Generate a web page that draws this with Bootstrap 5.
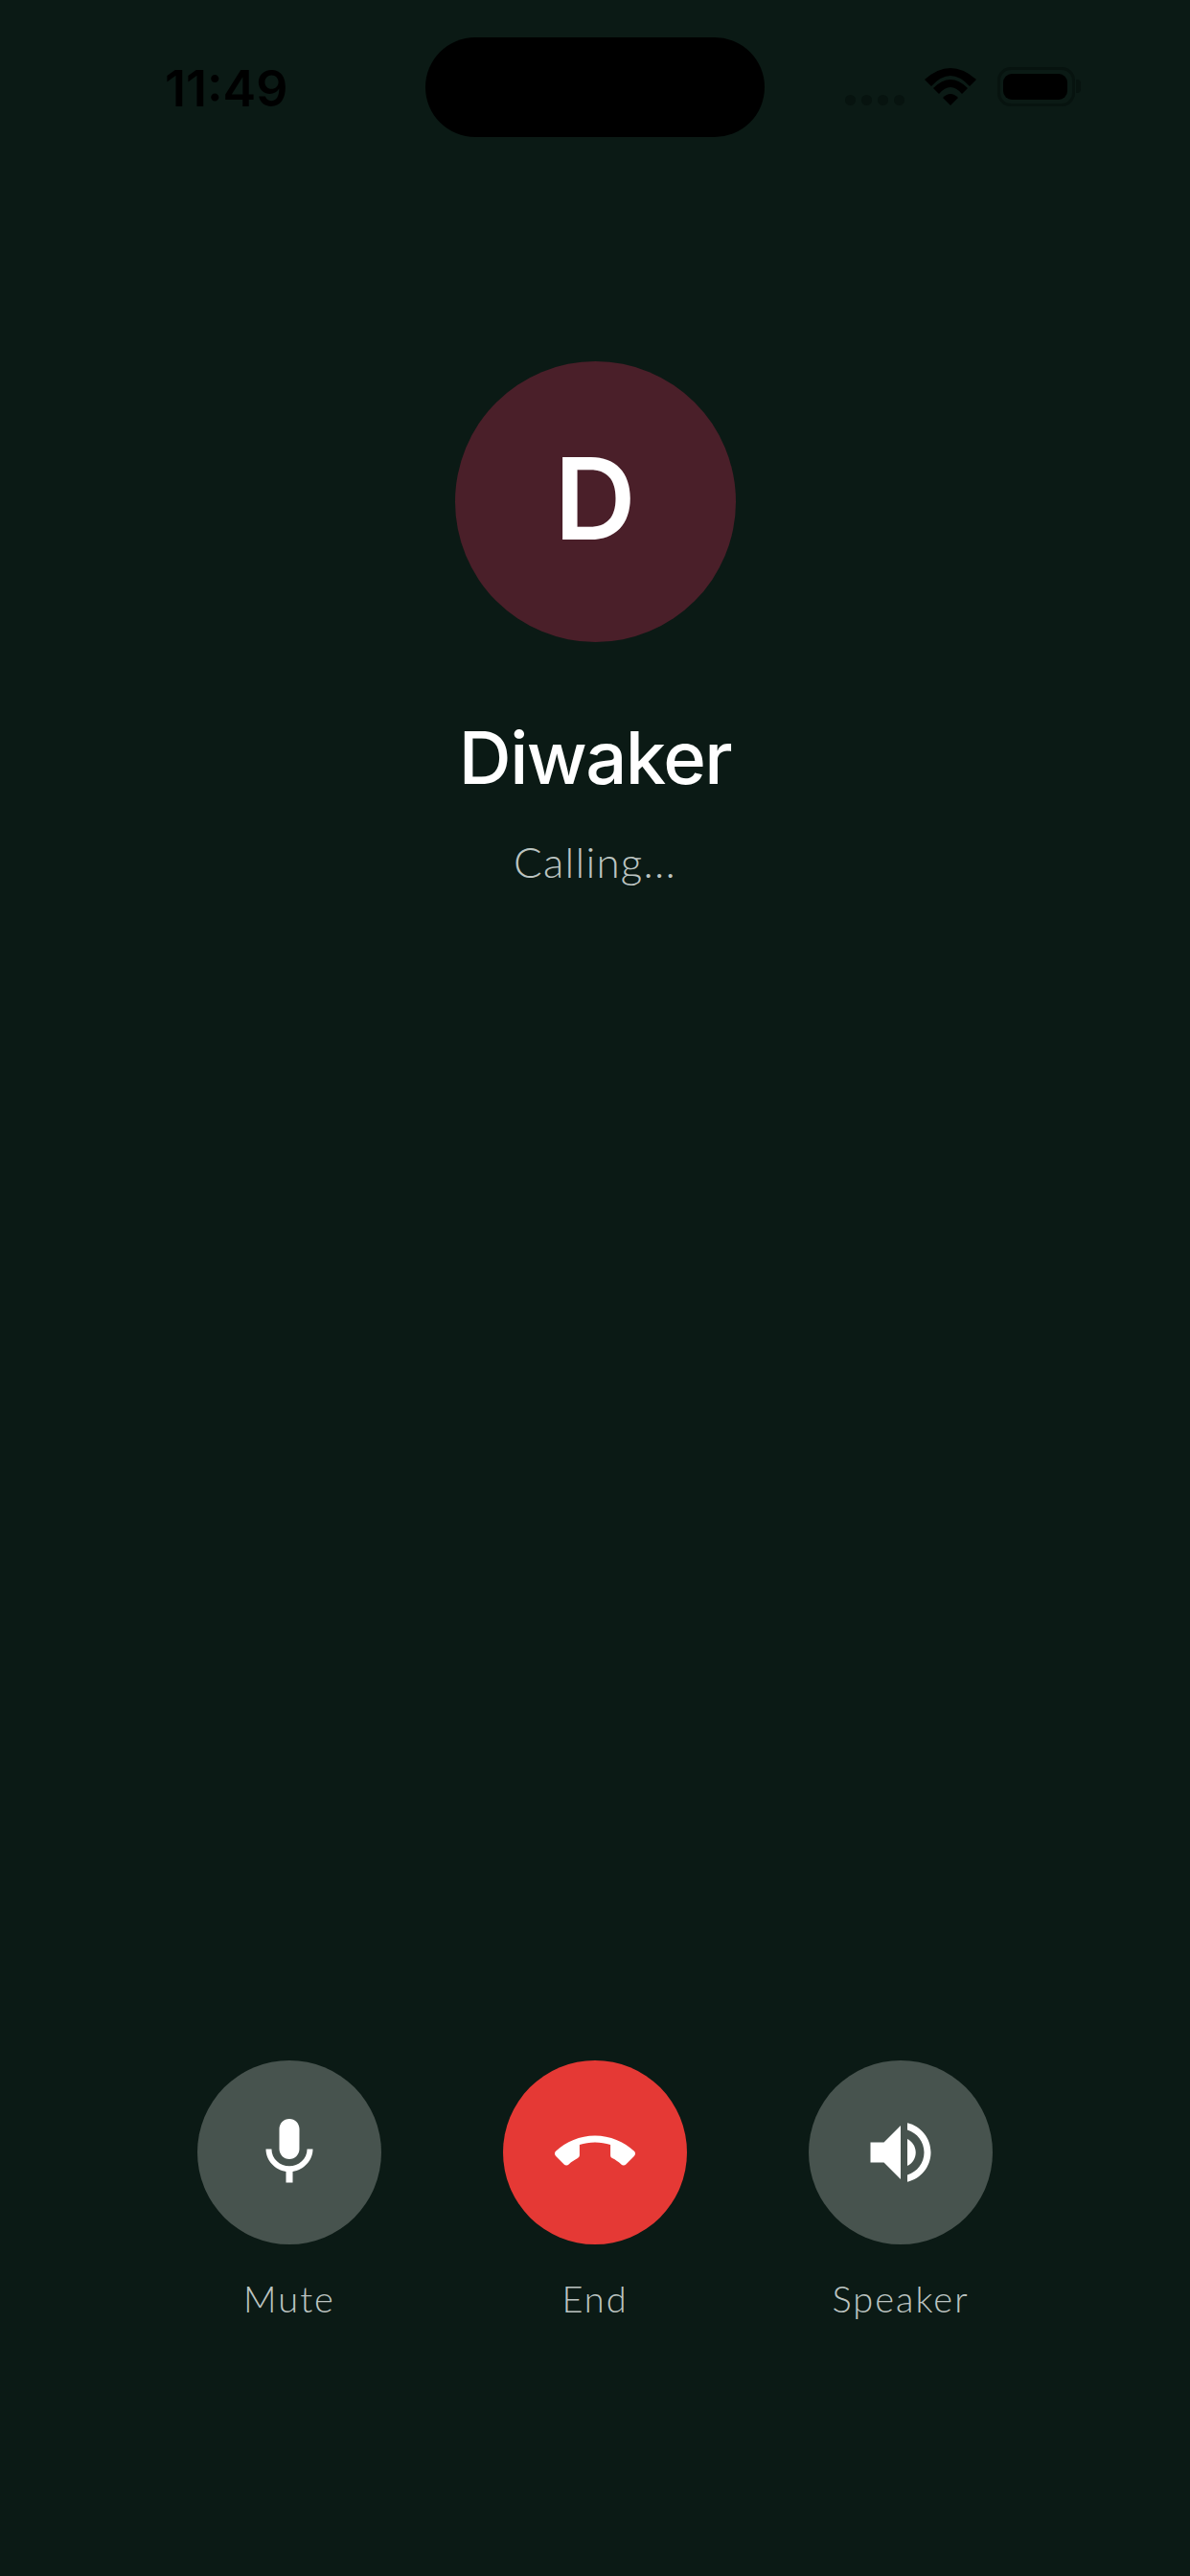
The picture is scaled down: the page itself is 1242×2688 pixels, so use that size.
<!DOCTYPE html>
<html lang="en">
<head>
    <meta charset="UTF-8">
    <meta name="viewport" content="width=device-width, initial-scale=1.0">
    <title>Calling Diwaker</title>
    <link href="https://cdn.jsdelivr.net/npm/bootstrap@5.3.0/dist/css/bootstrap.min.css" rel="stylesheet">
    <style>
        body {
            background: #0b1a15;
            font-family: Inter, "Noto Sans", sans-serif;
        }
        .call-screen {
            height: 2688px;
        }
        /* status bar */
        .status-row {
            display: grid;
            grid-template-columns: 1fr 354px 1fr;
            padding-top: 39px;
        }
        .status-time {
            font-weight: 600;
            font-size: 52px;
            line-height: 1;
            letter-spacing: 0;
            color: #000;
            padding: 28px 0 0 172px;
        }
        .island {
            height: 104px;
            background: #000;
            border-radius: 52px;
        }
        .status-icons {
            padding: 32px 0 0 84px;
        }
        .signal-dots {
            gap: 6px;
            margin-top: 28px;
            margin-right: 21px;
        }
        .signal-dots span {
            width: 11px;
            height: 11px;
            border-radius: 50%;
            background: #07130f;
        }
        .wifi-icon {
            width: 54px;
            height: 39px;
            margin-right: 22px;
        }
        .battery-box {
            width: 81px;
            height: 41px;
            margin-top: -1px;
            padding: 4px 5px 4px 3px;
            border: 3px solid #07130f;
            border-radius: 14px;
        }
        .battery-fill {
            width: 100%;
            height: 100%;
            background: #000;
            border-radius: 9px;
        }
        .battery-nub {
            width: 5px;
            height: 14px;
            margin: 12px 0 0 1px;
            background: #07130f;
            border-radius: 0 4px 4px 0;
        }
        /* caller */
        .avatar-disc {
            width: 293px;
            height: 293px;
            margin-top: 234px;
            padding-bottom: 8px;
            background: #4a1f29;
            color: #fff;
            font-size: 118px;
            font-weight: 600;
            line-height: 1;
        }
        .caller-name {
            margin: 74px 0 0;
            color: #fff;
            font-size: 76px;
            font-weight: 500;
            line-height: 92px;
            letter-spacing: -1.5px;
        }
        .call-state {
            margin: 37px 0 0;
            color: #bcc4c1;
            font-family: Lato, "Noto Sans", sans-serif;
            font-size: 44px;
            font-weight: 300;
            line-height: 52px;
            letter-spacing: 1.2px;
        }
        /* controls */
        .call-controls {
            gap: 127px;
            padding-bottom: 268px;
        }
        .control-item {
            width: 192px;
        }
        .control-btn {
            width: 192px;
            height: 192px;
            background: #47534e;
            border: 0;
        }
        .control-btn.is-end {
            background: #e53935;
        }
        .control-btn svg {
            width: 84px;
            height: 84px;
            fill: #fff;
        }
        .control-label {
            margin-top: 34px;
            color: #bcc4c1;
            font-family: Lato, "Noto Sans", sans-serif;
            font-size: 38px;
            font-weight: 300;
            line-height: 44px;
            letter-spacing: 2px;
            white-space: nowrap;
        }
    </style>
</head>
<body>
    <div class="call-screen d-flex flex-column">
        <!-- Status bar -->
        <div class="status-row">
            <div class="status-time">11:49</div>
            <div class="island"></div>
            <div class="status-icons d-flex align-items-start">
                <div class="signal-dots d-flex">
                    <span></span><span></span><span></span><span></span>
                </div>
                <svg class="wifi-icon" viewBox="0 0 54 39" fill="#000">
                    <path d="M0 12Q27-12 54 12L47 19Q27-3 7 19Z"/>
                    <path d="M9 21Q27 3 45 21L39 27Q27 13 15 27Z"/>
                    <path d="M19 31Q27 23 35 31L27 39Z"/>
                </svg>
                <div class="battery-box"><div class="battery-fill"></div></div>
                <div class="battery-nub"></div>
            </div>
        </div>

        <!-- Caller -->
        <div class="d-flex flex-column align-items-center">
            <div class="avatar-disc rounded-circle d-flex align-items-center justify-content-center">D</div>
            <h1 class="caller-name">Diwaker</h1>
            <p class="call-state">Calling...</p>
        </div>

        <!-- Controls -->
        <div class="call-controls d-flex justify-content-center mt-auto">
            <div class="control-item d-flex flex-column align-items-center">
                <button type="button" class="control-btn rounded-circle d-flex align-items-center justify-content-center p-0" aria-label="Mute">
                    <svg viewBox="0 0 24 24"><path d="M12 14c1.66 0 2.99-1.34 2.99-3L15 5c0-1.66-1.34-3-3-3S9 3.34 9 5v6c0 1.66 1.34 3 3 3zm5.3-3c0 3-2.54 5.1-5.3 5.1S6.7 14 6.7 11H5c0 3.41 2.72 6.23 6 6.72V21h2v-3.28c3.28-.48 6-3.3 6-6.72h-1.7z"/></svg>
                </button>
                <div class="control-label">Mute</div>
            </div>
            <div class="control-item d-flex flex-column align-items-center">
                <button type="button" class="control-btn is-end rounded-circle d-flex align-items-center justify-content-center p-0" aria-label="End">
                    <svg viewBox="0 0 24 24"><path d="M12 9c-1.6 0-3.15.25-4.6.72v3.1c0 .39-.23.74-.56.9-.98.49-1.87 1.12-2.66 1.85-.18.18-.43.28-.7.28-.28 0-.53-.11-.71-.29L.29 13.08c-.18-.17-.29-.42-.29-.7 0-.28.11-.53.29-.71C3.34 8.78 7.46 7 12 7s8.66 1.78 11.71 4.67c.18.18.29.43.29.71 0 .28-.11.53-.29.71l-2.48 2.48c-.18.18-.43.29-.71.29-.27 0-.52-.11-.7-.28-.79-.74-1.68-1.36-2.66-1.85-.33-.16-.56-.5-.56-.9v-3.1C15.15 9.25 13.6 9 12 9z"/></svg>
                </button>
                <div class="control-label">End</div>
            </div>
            <div class="control-item d-flex flex-column align-items-center">
                <button type="button" class="control-btn rounded-circle d-flex align-items-center justify-content-center p-0" aria-label="Speaker">
                    <svg viewBox="0 0 24 24"><path d="M3 9v6h4l5 5V4L7 9H3zm13.5 3c0-1.77-1.02-3.29-2.5-4.03v8.05c1.48-.73 2.5-2.25 2.5-4.02zM14 3.23v2.06c2.89.86 5 3.54 5 6.71s-2.11 5.85-5 6.71v2.06c4.01-.91 7-4.49 7-8.77s-2.99-7.86-7-8.77z"/></svg>
                </button>
                <div class="control-label">Speaker</div>
            </div>
        </div>
    </div>

    <script src="https://cdn.jsdelivr.net/npm/bootstrap@5.3.0/dist/js/bootstrap.bundle.min.js"></script>
</body>
</html>
